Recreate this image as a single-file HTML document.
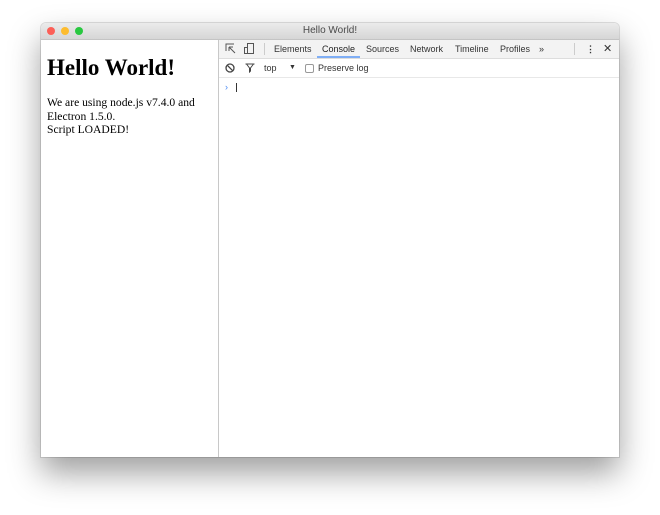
<!DOCTYPE html>
<html><head><style>
body{margin:0;width:660px;height:515px;background:#fff;position:relative;overflow:hidden;font-family:"Liberation Sans",sans-serif}
.win{position:absolute;left:41px;top:23px;width:578px;height:434px;background:#fff;border-radius:5px 5px 0 0;box-shadow:0 16px 32px rgba(0,0,0,.38),0 0 0 1px rgba(0,0,0,.12);overflow:hidden}
.title{height:16px;background:linear-gradient(#ebebeb,#d6d6d6);border-bottom:1px solid #c4c4c4;text-align:center;font-size:10px;line-height:16px;color:#4a4a4a;position:relative}
.dot{position:absolute;top:4px;width:8px;height:8px;border-radius:50%}
.left{position:absolute;left:0;top:17px;width:177px;bottom:0;border-right:1px solid #c8c8c8;font-family:"Liberation Serif",serif}
.left h1{font-size:23px;margin:15px 0 0 6px;font-weight:bold}
.left p{font-size:11.6px;margin:15px 0 0 6px;line-height:13.5px}
.dt{position:absolute;left:178px;top:17px;right:0;bottom:0}
.tb{height:18px;background:#f3f3f3;border-bottom:1px solid #ddd;position:relative;font-size:9px;color:#333}
.tb span{position:absolute;top:4px}
.cb{height:18px;border-bottom:1px solid #e8e8e8;position:relative;font-size:9px;color:#333}
.cb span{position:absolute;top:4px}
</style></head><body>
<div class="win">
<div class="title"><div class="dot" style="left:6px;background:#fc5f57"></div><div class="dot" style="left:20px;background:#fdbc2e"></div><div class="dot" style="left:34px;background:#28c840"></div>Hello World!</div>
<div class="left"><h1>Hello World!</h1><p>We are using node.js v7.4.0 and Electron 1.5.0.<br>Script LOADED!</p></div>
<div class="dt">
<div class="tb">
<svg style="position:absolute;left:6px;top:3px" width="12" height="12" viewBox="0 0 12 12" fill="none" stroke="#555"><path d="M1 8V1h8" /><path d="M4 4l6 6M4 4h4M4 4v4" /></svg>
<svg style="position:absolute;left:24px;top:2px" width="12" height="13" viewBox="0 0 12 13" fill="none" stroke="#555"><rect x="4.5" y="1.5" width="6" height="10"/><rect x="1.5" y="5.5" width="3" height="6"/></svg>
<div style="position:absolute;left:45px;top:3px;width:1px;height:12px;background:#ccc"></div>
<span style="left:55px">Elements</span>
<span style="left:103px;color:#222">Console</span>
<div style="position:absolute;left:98px;top:16px;width:43px;height:2px;background:#7faef5"></div>
<span style="left:147px">Sources</span>
<span style="left:191px">Network</span>
<span style="left:236px">Timeline</span>
<span style="left:281px">Profiles</span>
<span style="left:320px">»</span>
<div style="position:absolute;left:355px;top:3px;width:1px;height:12px;background:#ccc"></div>
<span style="left:367px;font-weight:bold">⋮</span>
<span style="left:384px;font-size:11px;top:2px">✕</span>
</div>
<div class="cb">
<svg style="position:absolute;left:6px;top:4px" width="10" height="10" viewBox="0 0 10 10" fill="none" stroke="#444" stroke-width="1.3"><circle cx="5" cy="5" r="4"/><path d="M2.2 2.2l5.6 5.6"/></svg>
<svg style="position:absolute;left:26px;top:4px" width="10" height="10" viewBox="0 0 10 10" fill="none" stroke="#444"><path d="M0.5 1h9M1.5 1l3 4v4l1-1V5l3-4"/></svg>
<span style="left:45px">top</span>
<span style="left:70px;font-size:7px;top:5px">▼</span>
<div style="position:absolute;left:86px;top:5px;width:7px;height:7px;border:1px solid #999;border-radius:2px"></div>
<span style="left:99px">Preserve log</span>
</div>
<div style="position:absolute;left:6px;top:42px;font-size:9px;color:#4a8af4">›</div>
<div style="position:absolute;left:17px;top:43px;width:1px;height:9px;background:#333"></div>
</div>
</div>
</body></html>
